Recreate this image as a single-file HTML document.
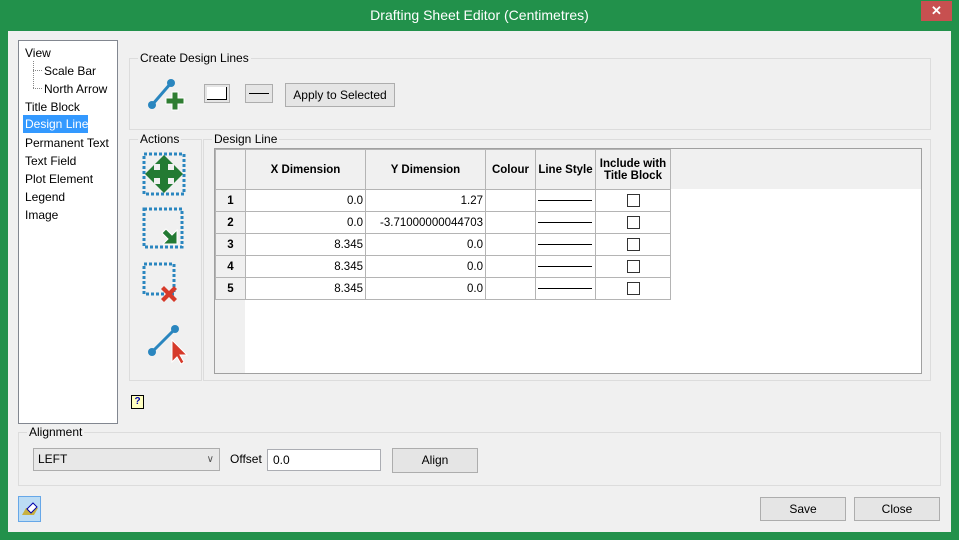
<!DOCTYPE html>
<html><head><style>
*{box-sizing:border-box;margin:0;padding:0}
body{width:959px;height:540px;background:#22914b;font-family:"Liberation Sans",sans-serif;font-size:12px;color:#000;position:relative;overflow:hidden}
.a{position:absolute;white-space:nowrap}
.win{left:8px;top:31px;width:943px;height:501px;background:#f0f0f0}
.grp{position:absolute;border:1px solid #dcdcdc}
.lg{position:absolute;background:#f0f0f0;padding:0 2px;top:-8px;left:8px;line-height:14px;white-space:nowrap}
.btn{position:absolute;border:1px solid #adadad;background:#e5e5e5;text-align:center;white-space:nowrap}
table{border-collapse:collapse;position:absolute}
td{border:1px solid #b4b4b4;height:22px;padding:0 2px;font-size:11.5px;white-space:nowrap}
th{border:1px solid #b4b4b4;background:#f0f0f0;font-size:11.5px;font-weight:bold;white-space:nowrap}
.rh{background:#f0f0f0;font-weight:bold;text-align:center}
.r{text-align:right}
.cb{display:inline-block;width:13px;height:13px;border:1px solid #333;background:#fff;vertical-align:middle}
.ls{display:inline-block;width:54px;border-top:1px solid #000;vertical-align:middle}
</style></head><body>
<div class="a" style="left:0;top:7px;width:959px;text-align:center;color:#fff;font-size:14px">Drafting Sheet Editor (Centimetres)</div>
<div class="a" style="left:921px;top:1px;width:31px;height:20px;background:#c75050;color:#fff;text-align:center;font-size:13px;font-weight:bold;line-height:20px">✕</div>
<div class="a win"></div>
<!-- tree -->
<div class="a" style="left:18px;top:40px;width:100px;height:384px;background:#fff;border:1px solid #828790"></div>
<div class="a" style="left:25px;top:44px;line-height:18px">View</div>
<div class="a" style="left:33px;top:61px;width:9px;height:27px;border-left:1px dotted #888"></div>
<div class="a" style="left:33px;top:70px;width:9px;border-top:1px dotted #888"></div>
<div class="a" style="left:33px;top:88px;width:9px;border-top:1px dotted #888"></div>
<div class="a" style="left:44px;top:62px;line-height:18px">Scale Bar</div>
<div class="a" style="left:44px;top:80px;line-height:18px">North Arrow</div>
<div class="a" style="left:25px;top:98px;line-height:18px">Title Block</div>
<div class="a" style="left:23px;top:115px;width:65px;height:18px;background:#3399ff;color:#fff;padding-left:2px;line-height:18px;overflow:hidden">Design Line</div>
<div class="a" style="left:25px;top:134px;line-height:18px">Permanent Text</div>
<div class="a" style="left:25px;top:152px;line-height:18px">Text Field</div>
<div class="a" style="left:25px;top:170px;line-height:18px">Plot Element</div>
<div class="a" style="left:25px;top:188px;line-height:18px">Legend</div>
<div class="a" style="left:25px;top:206px;line-height:18px">Image</div>
<!-- create design lines -->
<div class="grp" style="left:129px;top:58px;width:802px;height:72px"><div class="lg">Create Design Lines</div></div>
<svg class="a" style="left:144px;top:76px" width="46" height="44"><line x1="8" y1="29" x2="27" y2="7" stroke="#2a86bf" stroke-width="3"/><circle cx="8" cy="29" r="4" fill="#2a86bf"/><circle cx="27" cy="7" r="4" fill="#2a86bf"/><path d="M22 22h6v-6h6v6h6v6h-6v6h-6v-6h-6z" fill="#2f7d32" stroke="#fff" stroke-width="1"/></svg>
<div class="a" style="left:204px;top:84px;width:26px;height:19px;border:1px solid #adadad;background:#e5e5e5;padding:2px"><div style="width:20px;height:13px;background:#fff;border-right:1px solid #000;border-bottom:1px solid #000"></div></div>
<div class="a" style="left:245px;top:84px;width:28px;height:19px;border:1px solid #adadad;background:#e5e5e5"><div style="margin:8px 3px 0;border-top:1px solid #000"></div></div>
<div class="btn" style="left:285px;top:83px;width:110px;height:24px;line-height:22px">Apply to Selected</div>
<!-- actions -->
<div class="grp" style="left:129px;top:139px;width:73px;height:242px"><div class="lg">Actions</div></div>
<svg class="a" style="left:142px;top:152px" width="46" height="46"><rect x="2" y="2" width="40" height="40" fill="none" stroke="#2a86bf" stroke-width="3" stroke-dasharray="3 2"/><path d="M22 3l9 9h-5v6h6v-5l9 9-9 9v-5h-6v6h5l-9 9-9-9h5v-6h-6v5l-9-9 9-9v5h6v-6h-5z" fill="#237a33"/></svg>
<svg class="a" style="left:142px;top:207px" width="46" height="46"><rect x="2" y="2" width="38" height="38" fill="none" stroke="#2a86bf" stroke-width="3" stroke-dasharray="3 2"/><path d="M24 22l6 6 5-5v14h-14l5-5-6-6z" fill="#237a33" stroke="#fff"/></svg>
<svg class="a" style="left:142px;top:262px" width="46" height="46"><rect x="2" y="2" width="30" height="30" fill="none" stroke="#2a86bf" stroke-width="3" stroke-dasharray="3 2"/><path d="M22 24l5 5 5-5 3 3-5 5 5 5-3 3-5-5-5 5-3-3 5-5-5-5z" fill="#d63a2a"/></svg>
<svg class="a" style="left:142px;top:320px" width="50" height="48"><line x1="10" y1="32" x2="33" y2="9" stroke="#2a86bf" stroke-width="3"/><circle cx="10" cy="32" r="4" fill="#2a86bf"/><circle cx="33" cy="9" r="4" fill="#2a86bf"/><path d="M30 20l0 22 5-5 4 7 3-2-4-7 7 0z" fill="#d63a2a" stroke="#fff"/></svg>
<!-- design line -->
<div class="grp" style="left:203px;top:139px;width:728px;height:242px"><div class="lg">Design Line</div></div>
<div class="a" style="left:214px;top:148px;width:708px;height:226px;border:1px solid #a0a0a0;background:#fff"></div>
<div class="a" style="left:215px;top:149px;width:30px;height:224px;background:#f0f0f0"></div>
<div class="a" style="left:245px;top:149px;width:676px;height:40px;background:#f0f0f0"></div>
<table style="left:215px;top:149px">
<tr style="height:40px"><th style="width:30px"></th><th style="width:120px">X Dimension</th><th style="width:120px">Y Dimension</th><th style="width:50px">Colour</th><th style="width:60px">Line Style</th><th style="width:75px">Include with<br>Title Block</th></tr>
<tr><td class="rh">1</td><td class="r">0.0</td><td class="r">1.27</td><td></td><td><span class="ls"></span></td><td style="text-align:center"><span class="cb"></span></td></tr>
<tr><td class="rh">2</td><td class="r">0.0</td><td class="r">-3.71000000044703</td><td></td><td><span class="ls"></span></td><td style="text-align:center"><span class="cb"></span></td></tr>
<tr><td class="rh">3</td><td class="r">8.345</td><td class="r">0.0</td><td></td><td><span class="ls"></span></td><td style="text-align:center"><span class="cb"></span></td></tr>
<tr><td class="rh">4</td><td class="r">8.345</td><td class="r">0.0</td><td></td><td><span class="ls"></span></td><td style="text-align:center"><span class="cb"></span></td></tr>
<tr><td class="rh">5</td><td class="r">8.345</td><td class="r">0.0</td><td></td><td><span class="ls"></span></td><td style="text-align:center"><span class="cb"></span></td></tr>
</table>
<div class="a" style="left:131px;top:395px;width:13px;height:14px;border:1px solid #000;background:#ffffc0;font-size:10px;font-weight:bold;color:#00a;text-align:center;line-height:12px">?</div>
<!-- alignment -->
<div class="grp" style="left:18px;top:432px;width:923px;height:54px"><div class="lg">Alignment</div></div>
<div class="a" style="left:33px;top:448px;width:187px;height:23px;border:1px solid #adadad;background:#e8e8e8;padding-left:4px;line-height:21px">LEFT<span style="position:absolute;right:5px;color:#555;font-size:10px">∨</span></div>
<div class="a" style="left:230px;top:452px">Offset</div>
<div class="a" style="left:267px;top:449px;width:114px;height:22px;border:1px solid #abadb3;background:#fff;padding-left:5px;line-height:20px">0.0</div>
<div class="btn" style="left:392px;top:448px;width:86px;height:25px;line-height:23px">Align</div>
<div class="a" style="left:18px;top:496px;width:23px;height:26px;background:#bcdcf4;border:1px solid #66a7e8"></div>
<svg class="a" style="left:21px;top:501px" width="18" height="16"><path d="M1 14l4-7h12l-4 7z" fill="#c8b040"/><path d="M6 8l6-6 4 4-6 6z" fill="#fff" stroke="#00a"/></svg>
<div class="btn" style="left:760px;top:497px;width:86px;height:24px;line-height:22px">Save</div>
<div class="btn" style="left:854px;top:497px;width:86px;height:24px;line-height:22px">Close</div>
</body></html>
